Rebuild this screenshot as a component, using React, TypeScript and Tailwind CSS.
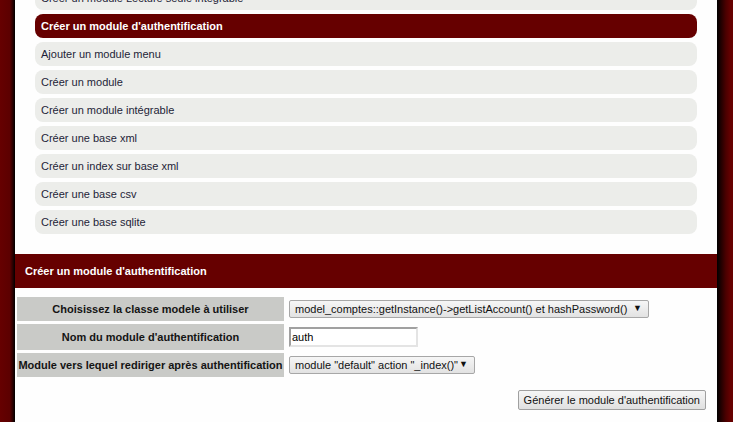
import React from "react";

const menu = [
  "Ajouter un module menu",
  "Créer un module",
  "Créer un module intégrable",
  "Créer une base xml",
  "Créer un index sur base xml",
  "Créer une base csv",
  "Créer une base sqlite",
];

const rows: { label: string; kind: "select" | "input"; value: string; width: string }[] = [
  { label: "Choisissez la classe modele à utiliser", kind: "select", value: "model_comptes::getInstance()->getListAccount() et hashPassword()", width: "w-[360px]" },
  { label: "Nom du module d'authentification", kind: "input", value: "auth", width: "w-[129px]" },
  { label: "Module vers lequel rediriger après authentification", kind: "select", value: 'module "default" action "_index()"', width: "w-[186px]" },
];

function FakeSelect({ value, width }: { value: string; width: string }) {
  return (
    <div className={`flex h-[18px] items-center justify-between rounded-[2px] border border-[#a7a7a7] bg-gradient-to-b from-[#f6f6f6] to-[#e2e2e2] pl-[5px] pr-[6px] text-[11px] text-[#111] ${width}`}>
      <span className="whitespace-nowrap">{value}</span>
      <span className="text-[9px]">▼</span>
    </div>
  );
}

export default function App() {
  return (
    <div className="flex h-[422px] overflow-hidden bg-white font-['Liberation_Sans',Arial,sans-serif]">
      <div className="w-[15px] shrink-0 bg-[linear-gradient(to_right,#660000_0%,#5c0000_65%,#2a0000_85%,#000_100%)]" />
      <main className="flex min-w-0 flex-1 flex-col bg-[#fefefe]">
        <ul className="mt-[-14px] flex flex-col gap-[4px] pl-[20px] pr-[20px]">
          <li className="flex h-[24px] items-center rounded-[8px] bg-[#ecedea] px-[6px] text-[11px] text-[#1e1e38]">
            Créer un module Lecture seule intégrable
          </li>
          <li className="flex h-[24px] items-center rounded-[8px] bg-[#660000] px-[6px] text-[11px] font-bold text-white">
            Créer un module d'authentification
          </li>
          {menu.map((m) => (
            <li key={m} className="flex h-[24px] items-center rounded-[8px] bg-[#ecedea] px-[6px] text-[11px] text-[#1e1e38]">
              {m}
            </li>
          ))}
        </ul>
        <h2 className="mt-[20px] flex h-[34px] items-center bg-[#660000] px-[10px] text-[11px] font-bold text-white">
          Créer un module d'authentification
        </h2>
        <div className="mt-[9px] flex flex-col gap-[3px] pl-[2px]">
          {rows.map((r, i) => (
            <div key={r.label} className={`flex gap-[5px] ${i === 1 ? "h-[26px]" : "h-[24px]"}`}>
              <div className="flex w-[267px] items-center justify-center bg-[#c9cac7] text-[11px] font-bold text-[#141414] whitespace-nowrap">
                {r.label}
              </div>
              <div className="flex items-center">
                {r.kind === "select" ? (
                  <FakeSelect value={r.value} width={r.width} />
                ) : (
                  <div className={`flex h-[20px] items-center border-2 border-t-[#a0a0a0] border-l-[#a0a0a0] border-r-[#e4e4e4] border-b-[#e4e4e4] bg-white pl-[1px] text-[11px] text-black ${r.width}`}>
                    {r.value}
                  </div>
                )}
              </div>
            </div>
          ))}
        </div>
        <div className="mt-[13px] flex justify-end pr-[11px]">
          <button className="h-[20px] rounded-[2px] border border-[#a0a0a0] bg-gradient-to-b from-[#f6f6f6] to-[#e0e0e0] px-[5px] text-[11px] text-[#111]">
            Générer le module d'authentification
          </button>
        </div>
      </main>
      <div className="w-[16px] shrink-0 bg-[linear-gradient(to_right,#000_0%,#1a0000_20%,#4a0000_55%,#660000_85%,#660000_100%)]" />
    </div>
  );
}
